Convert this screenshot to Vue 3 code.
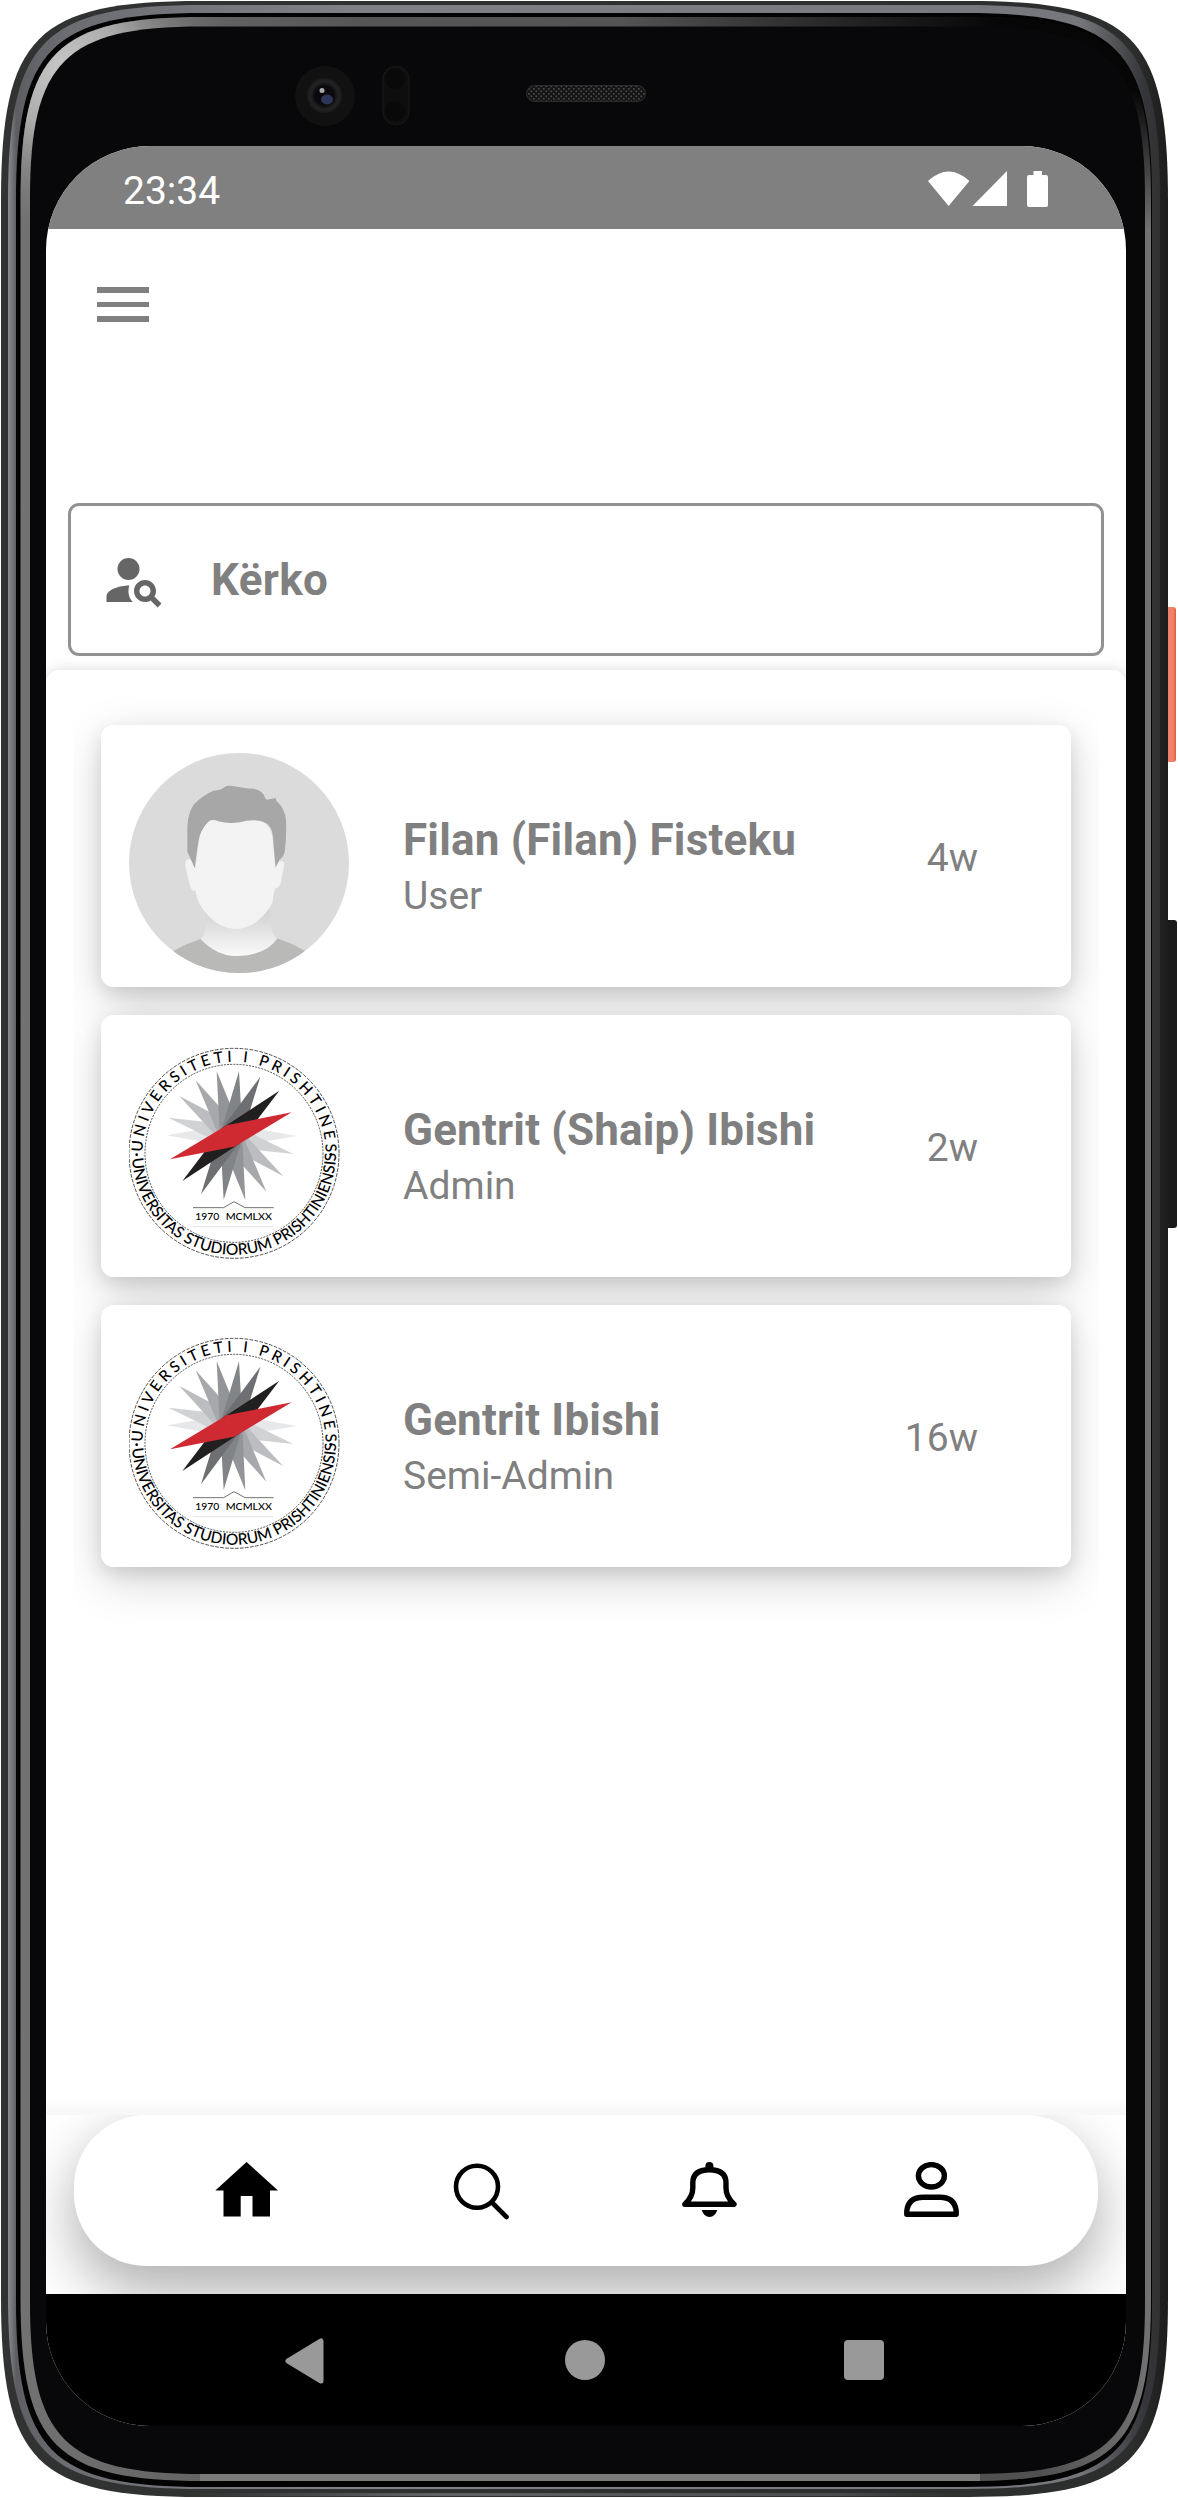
<script setup>
const people = [
  { name: 'Filan (Filan) Fisteku', role: 'User', age: '4w', avatar: 'face' },
  { name: 'Gentrit (Shaip) Ibishi', role: 'Admin', age: '2w', avatar: 'seal' },
  { name: 'Gentrit Ibishi', role: 'Semi-Admin', age: '16w', avatar: 'seal' },
]

// Rounded rectangle with continuous-curvature corners, used for the handset body.
function body(l, t, r, b, s, c) {
  return `M${l} ${t + s}C${l} ${t + c} ${l + c} ${t} ${l + s} ${t}H${r - s}` +
    `C${r - c} ${t} ${r} ${t + c} ${r} ${t + s}V${b - s}` +
    `C${r} ${b - c} ${r - c} ${b} ${r - s} ${b}H${l + s}` +
    `C${l + c} ${b} ${l} ${b - c} ${l} ${b - s}Z`
}

// Each ray of the seal is a rhombus running between two opposite tips.
const rays = [
  [170, 315, 560, 317, '#e6e8ea'],
  [175, 262, 550, 371, '#d0d2d4'],
  [208, 197, 519, 437, '#bbbdc0'],
  [257, 150, 469, 484, '#a6a8ab'],
  [320, 123, 406, 510, '#929497'],
  [387, 123, 341, 509, '#808487'],
  [451, 139, 273, 492, '#6d6f73'],
  [508, 181, 217, 452, '#221f20'],
  [545, 246, 180, 387, '#cf2a32'],
].map(([x1, y1, x2, y2, fill]) => {
  const cx = (x1 + x2) / 2
  const cy = (y1 + y2) / 2
  const len = Math.hypot(x2 - x1, y2 - y1)
  const px = (-(y2 - y1) / len) * 34
  const py = ((x2 - x1) / len) * 34
  return { fill, points: `${x1},${y1} ${cx + px},${cy + py} ${x2},${y2} ${cx - px},${cy - py}` }
})
</script>

<template>
  <div class="device">
    <svg class="frame" width="1178" height="2498" viewBox="0 0 1178 2498">
      <defs>
        <linearGradient id="rim" x1="0" x2="1" y1="0" y2="0">
          <stop offset="0" stop-color="#898c91" />
          <stop offset="0.007" stop-color="#5c5e62" />
          <stop offset="0.05" stop-color="#6c6d72" />
          <stop offset="0.3" stop-color="#808187" />
          <stop offset="0.93" stop-color="#76777c" />
          <stop offset="0.985" stop-color="#36373a" />
          <stop offset="1" stop-color="#303133" />
        </linearGradient>
        <linearGradient id="outer" x1="0" x2="1" y1="0" y2="0">
          <stop offset="0" stop-color="#303332" />
          <stop offset="0.97" stop-color="#2c2d2d" />
          <stop offset="1" stop-color="#1d1d1e" />
        </linearGradient>
        <linearGradient id="edge" x1="0" x2="1" y1="0" y2="0">
          <stop offset="0" stop-color="#727272" />
          <stop offset="0.3" stop-color="#565656" />
          <stop offset="0.9" stop-color="#505050" />
          <stop offset="1" stop-color="#727272" />
        </linearGradient>
        <radialGradient id="glow" cx="62" cy="68" r="170" gradientUnits="userSpaceOnUse">
          <stop offset="0" stop-color="#c6c6c6" />
          <stop offset="0.35" stop-color="#b4b4b4" stop-opacity="0.9" />
          <stop offset="1" stop-color="#707070" stop-opacity="0" />
        </radialGradient>
        <linearGradient id="fade" x1="620" x2="1000" y1="0" y2="0" gradientUnits="userSpaceOnUse">
          <stop offset="0" stop-color="#060607" stop-opacity="0" />
          <stop offset="1" stop-color="#060607" />
        </linearGradient>
        <linearGradient id="sidefade" x1="0" x2="0" y1="90" y2="230" gradientUnits="userSpaceOnUse">
          <stop offset="0" stop-color="#060607" />
          <stop offset="1" stop-color="#060607" stop-opacity="0" />
        </linearGradient>
        <linearGradient id="lowrim" x1="190" x2="1000" y1="0" y2="0" gradientUnits="userSpaceOnUse">
          <stop offset="0" stop-color="#606163" stop-opacity="0" />
          <stop offset="0.3" stop-color="#606163" />
          <stop offset="0.8" stop-color="#4a4b4c" />
          <stop offset="1" stop-color="#333" stop-opacity="0" />
        </linearGradient>
        <linearGradient id="power" x1="0" x2="1" y1="0" y2="0">
          <stop offset="0" stop-color="#d9583f" />
          <stop offset="0.25" stop-color="#f0806a" />
          <stop offset="0.75" stop-color="#f0836c" />
          <stop offset="1" stop-color="#e9583a" />
        </linearGradient>
        <radialGradient id="lens" cx="0.5" cy="0.5" r="0.5">
          <stop offset="0" stop-color="#050508" />
          <stop offset="0.55" stop-color="#0b0b0f" />
          <stop offset="0.8" stop-color="#232324" />
          <stop offset="1" stop-color="#19191a" />
        </radialGradient>
        <pattern id="mesh" width="5" height="5" patternUnits="userSpaceOnUse">
          <rect width="5" height="5" fill="#151515" />
          <rect x="0.5" y="0.5" width="1.6" height="1.6" fill="#4c4c4c" />
          <rect x="3" y="3" width="1.6" height="1.6" fill="#4c4c4c" />
        </pattern>
        <clipPath id="glass">
          <path :d="body(20, 16.500, 1151.500, 2481, 184, 35)" />
        </clipPath>
      </defs>
      <rect x="1164" y="607" width="12" height="155" rx="3" fill="url(#power)" />
      <rect x="1164" y="920" width="13" height="308" rx="3" fill="#1a1b1b" />
      <path :d="body(1, 1, 1168, 2497, 200, 35)" fill="url(#outer)" />
      <path d="M190 2493H1000V2496H190Z" fill="url(#lowrim)" />
      <path :d="body(8, 5, 1160, 2489, 195, 35)" fill="url(#rim)" />
      <path :d="body(16, 13, 1152, 2487, 188, 35)" fill="#030303" />
      <path :d="body(20.5, 17, 1151, 2481, 184, 35)" fill="url(#edge)" />
      <path :d="body(20.5, 17, 1151, 2481, 184, 35)" fill="url(#glow)" />
      <path d="M200 2477.500H980" stroke="#7a7a7a" stroke-width="7" />
      <g clip-path="url(#glass)">
        <path d="M600 15H1152V90H600Z" fill="url(#fade)" />
        <path d="M1100 89.500H1152V230H1100Z" fill="url(#sidefade)" />
      </g>
      <path :d="body(30, 26.500, 1145, 2474, 172, 35)" fill="#08080a" />
      <circle cx="325" cy="96" r="30" fill="#111112" />
      <circle cx="324.500" cy="95.500" r="17.500" fill="url(#lens)" />
      <ellipse cx="327" cy="99.500" rx="6" ry="5" fill="#2c3555" />
      <circle cx="322" cy="90.500" r="2.500" fill="#a9a9ac" />
      <rect x="383" y="66.500" width="26" height="58" rx="13" fill="#0e0e0f" stroke="#151516" stroke-width="1.500" />
      <circle cx="395" cy="79" r="10" fill="#09090a" />
      <circle cx="395" cy="111" r="10" fill="#09090a" />
      <rect x="526.500" y="85.500" width="119" height="16" rx="8" fill="url(#mesh)" stroke="#2c2c2c" />
    </svg>

    <div class="screen">
      <header class="status">
        <span class="clock">23:34</span>
        <svg width="122" height="38" viewBox="928 170 122 38" fill="#fff">
          <path d="M949.600 206L929 181Q949.600 162 970.400 181Z" />
          <path d="M1008 171V206H973.500Z" />
          <path d="M1034.500 171H1043V175H1047A2 2 0 0 1 1049 177V205A2 2 0 0 1 1047 207H1030A2 2 0 0 1 1028 205V177A2 2 0 0 1 1030 175H1034.500Z" />
        </svg>
      </header>

      <div class="toolbar">
        <div class="menu"><i></i><i></i><i></i></div>
      </div>

      <div class="search">
        <svg width="66" height="66" viewBox="0 0 24 24" fill="#666">
          <circle cx="10" cy="8" r="4" />
          <path d="M10.350 14.010C7.620 13.910 2 15.270 2 18v2h9.540c-2.470-2.760-1.230-5.890-1.190-5.990z" />
          <path d="M19.430 18.020c.36-.59.57-1.280.57-2.020 0-2.210-1.790-4-4-4s-4 1.790-4 4 1.790 4 4 4c.74 0 1.430-.22 2.020-.57L20.590 22 22 20.590l-2.570-2.570zM16 18c-1.100 0-2-.9-2-2s.9-2 2-2 2 .9 2 2-.9 2-2 2z" />
        </svg>
        <span>Kërko</span>
      </div>

      <main class="panel">
        <div class="list">
          <article v-for="(p, i) in people" :key="p.name" class="card">
            <svg v-if="p.avatar === 'face'" class="avatar face" viewBox="267 819 660 660">
              <defs>
                <linearGradient id="neck" x1="0" x2="0" y1="0" y2="1">
                  <stop offset="0.15" stop-color="#d4d4d4" />
                  <stop offset="1" stop-color="#fafafa" />
                </linearGradient>
              </defs>
              <rect x="267" y="819" width="660" height="660" fill="#dbdbdb" />
              <path d="M401 1412Q440 1390 482 1377Q530 1428 590 1428Q680 1425 712 1375Q755 1390 795 1412L927 1479H267Z" fill="#b9b9b8" />
              <path d="M496 1280V1345Q492 1370 482 1377Q530 1428 590 1428Q680 1425 712 1375Q696 1365 694 1345L688 1280Z" fill="url(#neck)" />
              <path d="M466 1165L480 1060Q495 1010 520 1015H640Q690 1025 697 1070L706 1165Q712 1145 725 1143Q735 1143 731 1165L722 1210Q716 1225 706 1225Q700 1240 698 1265Q690 1290 650 1325Q620 1347 585 1347Q540 1345 505 1308Q470 1270 466 1230Q462 1235 456 1230Q450 1222 445 1195L436 1160Q434 1138 447 1137Q458 1140 466 1165Z" fill="#f3f3f3" />
              <path d="M464 1165Q450 1130 442 1115V1040Q445 990 465 970Q490 945 520 932Q545 930 555 920Q565 915 590 920L630 926Q655 924 672 945Q674 955 680 959L707 954L709 962Q735 985 738 1020Q740 1060 735 1110Q732 1130 718 1140L707 1162Q702 1110 699 1070Q697 1035 670 1025Q650 1018 620 1022Q575 1035 535 1024Q515 1015 505 1025Q480 1050 475 1085Q468 1130 464 1165Z" fill="#a7a7a7" />
            </svg>
            <svg v-else class="avatar" viewBox="57 38 660 660">
              <path :id="`arc-top-${i}`" d="M97 369A275 275 0 0 1 647 369" fill="none" />
              <path :id="`arc-low-${i}`" d="M66.500 350A306 306 0 1 0 677.500 350" fill="none" />
              <g fill="none" stroke="#111" stroke-width="2.200">
                <circle cx="372" cy="369" r="315" stroke-dasharray="11 4" />
                <circle cx="372" cy="369" r="267" stroke-dasharray="6 3.500" />
              </g>
              <text class="ring" font-size="46"><textPath :href="`#arc-top-${i}`" startOffset="4" textLength="856">UNIVERSITETI I PRISHTINES</textPath></text>
              <text class="ring" font-size="47"><textPath :href="`#arc-low-${i}`" startOffset="34" textLength="944" lengthAdjust="spacingAndGlyphs">UNIVERSITAS STUDIORUM PRISHTINIENSIS</textPath></text>
              <circle cx="80" cy="373" r="4" />
              <circle cx="662" cy="372" r="4" />
              <polygon v-for="r in rays" :key="r.fill" :points="r.points" :fill="r.fill" />
              <path d="M249 532H341L372 514L405 532H491" fill="none" stroke="#555" stroke-width="2.500" />
              <path d="M249 589H491" stroke="#ddd" stroke-width="2.500" />
              <text class="year" x="256" y="570" font-size="27" textLength="72" lengthAdjust="spacingAndGlyphs">1970</text>
              <text class="year" x="347" y="570" font-size="27" textLength="139" lengthAdjust="spacingAndGlyphs">MCMLXX</text>
            </svg>
            <div class="who">
              <h2>{{ p.name }}</h2>
              <p>{{ p.role }}</p>
            </div>
            <span class="age">{{ p.age }}</span>
          </article>
        </div>
      </main>

      <nav class="dock">
        <div class="pill">
          <svg class="home" width="64" height="56" viewBox="215 2162 64 56">
            <path d="M246.600 2162L278 2190.500H270V2216.500H252.500V2196H240.700V2216.500H223.500V2190.500H215.300Z" />
          </svg>
          <svg class="find" width="58" height="58" viewBox="452 2161 58 58" fill="none" stroke="#000" stroke-width="4.600" stroke-linecap="round">
            <circle cx="477" cy="2185.700" r="21" />
            <path d="M493 2202.500L506.500 2216" />
          </svg>
          <svg class="bell" width="56" height="56" viewBox="682 2163 56 56">
            <path d="M692.800 2184C692.800 2174 700 2170.800 709.400 2170.800S726 2174 726 2184V2189C726 2195 729 2200.500 734 2205.200H684.800C690 2200.500 692.800 2195 692.800 2189Z" fill="none" stroke="#000" stroke-width="5.400" stroke-linejoin="round" />
            <path d="M705.400 2169V2167A4 4 0 0 1 713.400 2167V2169Z" />
            <path d="M701.700 2211H717.300Q715 2218 709.500 2218T701.700 2211Z" />
          </svg>
          <svg width="56" height="56" viewBox="904 2163 56 56" fill="none" stroke="#000" stroke-width="5.400" stroke-linejoin="round">
            <ellipse cx="931.400" cy="2176.800" rx="13" ry="11.200" />
            <path d="M906.800 2215.200V2212Q908.500 2198.300 923 2198.300H940Q954.500 2198.300 956.200 2212V2215.200Z" />
          </svg>
        </div>
      </nav>

      <footer class="keys">
        <svg width="40" height="46" viewBox="0 0 40 46"><path d="M3 23L36 3V43Z" fill="#999" stroke="#999" stroke-width="5" stroke-linejoin="round" /></svg>
        <i class="home-key"></i>
        <i class="recents-key"></i>
      </footer>
    </div>
  </div>
</template>

<style>
body {
  background: #fff;
}
</style>

<style scoped>
* {
  box-sizing: border-box;
}
.device {
  position: relative;
  width: 1178px;
  height: 2498px;
  padding: 146px 0 0 46px;
  overflow: hidden;
  font-family: Roboto, "Liberation Sans", sans-serif;
  color: #808080;
}
.frame {
  position: absolute;
  inset: 0;
}
svg {
  display: block;
  flex: none;
}
.screen {
  position: relative;
  display: flex;
  flex-direction: column;
  width: 1080px;
  height: 2280px;
  border-radius: 104px;
  overflow: hidden;
  background: #fff;
}
.status {
  flex: none;
  display: flex;
  justify-content: space-between;
  align-items: flex-start;
  height: 83px;
  padding: 22px 77px 0 77px;
  background: #808080;
  color: #fff;
}
.status svg {
  margin-top: 2px;
}
.clock {
  font-size: 39px;
  line-height: 46px;
}
.toolbar {
  flex: none;
  height: 274px;
  padding: 58px 51px 0;
}
.menu {
  display: flex;
  flex-direction: column;
  gap: 9px;
  width: 52px;
}
.menu i {
  height: 5.500px;
  background: #808080;
}
.search {
  flex: none;
  display: flex;
  align-items: center;
  height: 153px;
  margin: 0 22px;
  padding-left: 30px;
  border: 3px solid #929292;
  border-radius: 11px;
  font-size: 44px;
  font-weight: 700;
  line-height: 52px;
  letter-spacing: 0.3px;
}
.search svg {
  margin-right: 44px;
}
.panel {
  flex: 1;
  margin-top: 14px;
  padding: 0 27px;
  border-radius: 14px 14px 0 0;
  background: linear-gradient(to bottom, #fff calc(100% - 18px), #f7f7f7 100%);
  box-shadow: 0 0 14px rgba(0, 0, 0, 0.15);
}
.list {
  position: relative;
  z-index: 0;
  display: flex;
  flex-direction: column;
  gap: 28px;
  padding: 55px 28px 70px;
  overflow: hidden;
}
.card {
  position: relative;
  display: flex;
  align-items: flex-start;
  height: 262px;
  padding: 28px 93px 0 28px;
  border-radius: 13px;
  background: #fff;
}
.card::before {
  content: "";
  position: absolute;
  inset: 0;
  z-index: -1;
  border-radius: 13px;
  box-shadow: 0 6px 18px rgba(0, 0, 0, 0.11), 0 14px 46px rgba(0, 0, 0, 0.17);
}
.avatar {
  width: 220px;
  height: 220px;
}
.face {
  border-radius: 50%;
}
.ring,
.year {
  font-family: Lato, sans-serif;
  font-weight: 500;
  fill: #000;
}
.who {
  flex: 1;
  margin: 61px 0 0 54px;
}
h2 {
  margin: 0;
  font-size: 44px;
  line-height: 52px;
  font-weight: 700;
  letter-spacing: 0.18px;
  white-space: nowrap;
}
p {
  margin: 7px 0 0;
  font-size: 39px;
  line-height: 46px;
}
.age {
  margin-top: 82px;
  font-size: 39px;
  line-height: 46px;
}
.dock {
  position: relative;
  flex: none;
  height: 179px;
  padding: 0 28px;
  background: #fff;
  overflow: hidden;
}
.pill {
  display: flex;
  align-items: flex-start;
  height: 151px;
  padding: 47px 0 0 141px;
  border-radius: 72px;
  background: #fff;
  box-shadow: 0 28px 60px rgba(0, 0, 0, 0.29), 0 0 50px rgba(0, 0, 0, 0.05);
}
.home {
  margin-right: 173px;
}
.find {
  margin-right: 172px;
}
.bell {
  margin-right: 166px;
}
.keys {
  flex: none;
  display: flex;
  justify-content: space-between;
  height: 132px;
  padding: 44px 242px 0 239px;
  background: #000;
}
.keys i {
  width: 40px;
  height: 40px;
  margin-top: 2px;
  background: #999;
}
.home-key {
  border-radius: 50%;
}
.recents-key {
  border-radius: 4px;
}
</style>
